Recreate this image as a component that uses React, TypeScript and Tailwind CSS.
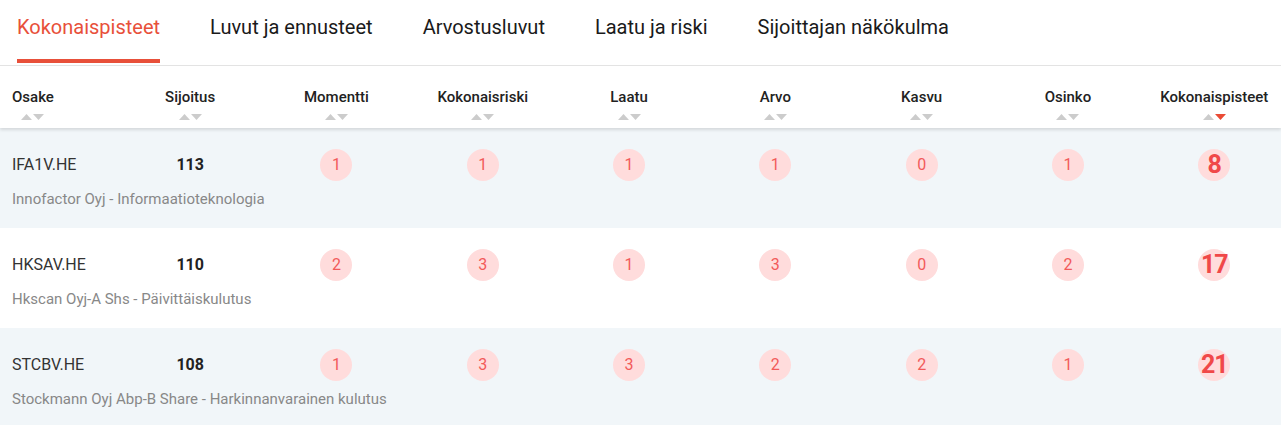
import React from "react";

const tabs = [
  "Kokonaispisteet",
  "Luvut ja ennusteet",
  "Arvostusluvut",
  "Laatu ja riski",
  "Sijoittajan näkökulma",
];

const columns = [
  "Sijoitus",
  "Momentti",
  "Kokonaisriski",
  "Laatu",
  "Arvo",
  "Kasvu",
  "Osinko",
  "Kokonaispisteet",
];

type Row = {
  ticker: string;
  name: string;
  rank: number;
  scores: number[];
  total: number;
};

const rows: Row[] = [
  {
    ticker: "IFA1V.HE",
    name: "Innofactor Oyj - Informaatioteknologia",
    rank: 113,
    scores: [1, 1, 1, 1, 0, 1],
    total: 8,
  },
  {
    ticker: "HKSAV.HE",
    name: "Hkscan Oyj-A Shs - Päivittäiskulutus",
    rank: 110,
    scores: [2, 3, 1, 3, 0, 2],
    total: 17,
  },
  {
    ticker: "STCBV.HE",
    name: "Stockmann Oyj Abp-B Share - Harkinnanvarainen kulutus",
    rank: 108,
    scores: [1, 3, 3, 2, 2, 1],
    total: 21,
  },
];

const grid = "grid grid-cols-[117px_repeat(8,146.3px)]";

const SortArrows = ({ active }: { active?: boolean }) => (
  <div className="flex items-center justify-center gap-[1px] mt-[8px]">
    <svg width="11" height="6" viewBox="0 0 11 6">
      <path d="M0 6 L5.5 0 L11 6 Z" fill="#cccccc" />
    </svg>
    <svg width="11" height="6" viewBox="0 0 11 6">
      <path d="M0 0 L11 0 L5.5 6 Z" fill={active ? "#ea4b35" : "#cccccc"} />
    </svg>
  </div>
);

const HeaderCell = ({ label, active }: { label: string; active?: boolean }) => (
  <div className="flex flex-col items-center">
    <span className="text-[15px] font-medium text-[#222] leading-[18px]">{label}</span>
    <SortArrows active={active} />
  </div>
);

export default function App() {
  return (
    <div
      className="w-[1281px] h-[425px] overflow-hidden bg-white"
      style={{ fontFamily: "Roboto, 'Liberation Sans', sans-serif" }}
    >
      {/* välilehdet */}
      <div className="flex h-[66px] border-b border-[#e4e4e4] pl-[17px] gap-[50px]">
        {tabs.map((t, i) => (
          <div key={t} className="relative h-full flex items-start pt-[14px]">
            <span
              className={`text-[20px] leading-[26px] ${
                i === 0 ? "text-[#e8503a]" : "text-[#1a1a1a]"
              }`}
            >
              {t}
            </span>
            {i === 0 && (
              <div className="absolute left-0 right-0 bottom-[2px] h-[4px] bg-[#e8503a]" />
            )}
          </div>
        ))}
      </div>

      {/* otsikkorivi */}
      <div className="relative z-10 h-[62px] bg-white shadow-[0_2px_3px_rgba(0,0,0,0.12)]">
        <div className={`${grid} pt-[22px]`}>
          <div className="pl-[12px] flex">
            <HeaderCell label="Osake" />
          </div>
          {columns.map((c) => (
            <HeaderCell key={c} label={c} active={c === "Kokonaispisteet"} />
          ))}
        </div>
      </div>

      {/* rivit */}
      {rows.map((r, idx) => (
        <div
          key={r.ticker}
          className={`h-[100px] pt-[21px] ${idx % 2 === 0 ? "bg-[#f1f6f9]" : "bg-white"}`}
        >
          <div className={`${grid} items-center h-[32px]`}>
            <div className="pl-[12px] text-[16px] text-[#333] whitespace-nowrap">{r.ticker}</div>
            <div className="text-center text-[16px] font-bold text-[#222]">{r.rank}</div>
            {r.scores.map((s, i) => (
              <div key={i} className="flex justify-center">
                <div className="w-[32px] h-[32px] rounded-full bg-[#ffdcdc] flex items-center justify-center text-[16px] text-[#f25a5a]">
                  {s}
                </div>
              </div>
            ))}
            <div className="flex justify-center">
              <div className="w-[32px] h-[32px] rounded-full bg-[#ffdcdc] flex items-center justify-center text-[25px] font-bold text-[#f04848] tracking-[-1px]">
                {r.total}
              </div>
            </div>
          </div>
          <div className="pl-[12px] mt-[8px] text-[15px] text-[#888] leading-[20px] whitespace-nowrap">
            {r.name}
          </div>
        </div>
      ))}
    </div>
  );
}
